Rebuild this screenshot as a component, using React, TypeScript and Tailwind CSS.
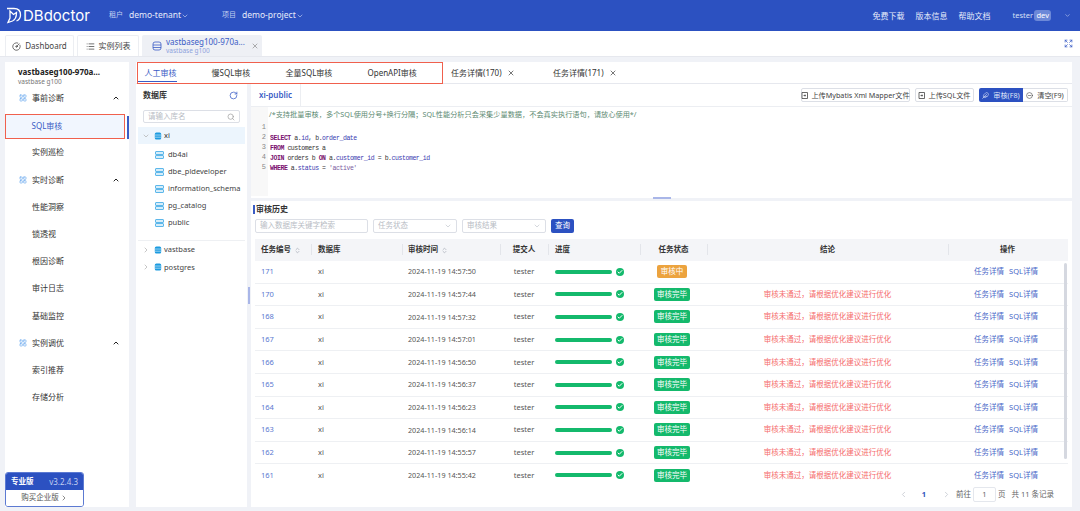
import { ChevronDown, ChevronUp, ChevronRight, ChevronLeft, RotateCw, Search, List, CircleGauge, X, Expand, ChevronsUpDown, Check, Feather, MinusCircle, LayoutGrid } from "lucide-react";

const FONT = "font-['Noto_Sans','Noto_Sans_CJK_SC',sans-serif]";

function Logo() {
  return (
    <svg width="16" height="17" viewBox="0 0 16 17" fill="none" stroke="white" strokeWidth="1.300">
      <path d="M1 1.500h7c4 0 6.500 2.500 6.500 6.500 0 3-1.500 5-4 6" />
      <path d="M4 4v7l-2 4.500 4.500-1.500c2.500-1 4-4 4-8.500L7.500 7.500z" />
    </svg>
  );
}

function DbIcon({ size = 8 }: { size?: number }) {
  return (
    <svg width={size} height={size} viewBox="0 0 10 10" className="shrink-0">
      <rect x="1" y="0.500" width="8" height="9" rx="2" fill="#1c9be0" />
      <path d="M1 3.800h8M1 6.500h8" stroke="white" strokeWidth="0.700" />
    </svg>
  );
}

function SchemaIcon() {
  return (
    <svg width="9" height="8" viewBox="0 0 9 8" fill="none" className="shrink-0">
      <rect x="0.500" y="0.500" width="8" height="3" rx="0.500" stroke="#5db7ea" fill="#d5edfa" />
      <rect x="0.500" y="4.500" width="8" height="3" rx="0.500" stroke="#5db7ea" fill="#d5edfa" />
    </svg>
  );
}

function ImportIcon() {
  return (
    <svg width="7" height="7" viewBox="0 0 7 7" fill="none" stroke="#444" strokeWidth="0.800" className="shrink-0">
      <path d="M1 0.500h5.500v6H1M1 0.500v6M3 3.500h2M3 3.500l1-1M3 3.500l1 1" />
    </svg>
  );
}

function NavGroup({ label }: { label: string }) {
  return (
    <div className="flex h-[27.200px] items-center pl-[14px] pr-[9px] text-[8px] text-[#333]">
      <LayoutGrid size={8} color="#6aa9ee" className="mr-[5px]" />
      <span className="flex-1">{label}</span>
      <ChevronUp size={8} color="#222" strokeWidth={3} />
    </div>
  );
}

function NavItem({ label }: { label: string }) {
  return <div className="flex h-[27.200px] items-center pl-[27px] text-[8px] text-[#333]">{label}</div>;
}

const rows = [
  ["171", "2024-11-19 14:57:50", "run"],
  ["170", "2024-11-19 14:57:44", "done"],
  ["168", "2024-11-19 14:57:32", "done"],
  ["167", "2024-11-19 14:57:01", "done"],
  ["166", "2024-11-19 14:56:50", "done"],
  ["165", "2024-11-19 14:56:37", "done"],
  ["164", "2024-11-19 14:56:23", "done"],
  ["163", "2024-11-19 14:56:14", "done"],
  ["162", "2024-11-19 14:55:57", "done"],
  ["161", "2024-11-19 14:55:42", "done"],
];

function Sort() {
  return <ChevronsUpDown size={7} color="#b5b9c2" strokeWidth={3} className="ml-[3px]" />;
}

const cols = "grid grid-cols-[56px_91px_98px_48px_92px_67px_241px_119px]";

function Divider() {
  return <span className="absolute left-0 top-[5px] h-[11px] w-px bg-[#e3e5ea]" />;
}

function Table() {
  return (
    <div className="mx-[4px] flex min-h-0 flex-1 flex-col overflow-hidden">
      <div className={`${cols} h-[22px] shrink-0 items-center bg-[#f4f5f8] text-[7.500px] font-semibold text-[#333]`}>
        <div className="relative flex items-center pl-[6px]">任务编号<Sort /></div>
        <div className="relative flex h-full items-center pl-[7px]"><Divider />数据库</div>
        <div className="relative flex h-full items-center pl-[6px]"><Divider />审核时间<Sort /></div>
        <div className="relative flex h-full items-center justify-center"><Divider />提交人</div>
        <div className="relative flex h-full items-center pl-[7px]"><Divider />进度</div>
        <div className="relative flex h-full items-center justify-center"><Divider />任务状态</div>
        <div className="relative flex h-full items-center justify-center"><Divider />结论</div>
        <div className="relative flex h-full items-center justify-center"><Divider />操作</div>
      </div>
      <div className="relative min-h-0 flex-1 overflow-hidden">
        {rows.map(([id, time, st]) => (
          <div key={id} className={`${cols} h-[22.600px] items-center border-b border-[#eef0f3] text-[7.500px] text-[#555]`}>
            <div className="pl-[6px] text-[#5a78d0]">{id}</div>
            <div className="pl-[7px]">xi</div>
            <div className="whitespace-nowrap pl-[6px] text-[7.200px]">{time}</div>
            <div className="text-center">tester</div>
            <div className="flex items-center pl-[7px]">
              <div className="h-[4px] w-[57px] rounded-full bg-[#14b96c]" />
              <div className="ml-[4px] flex h-[8px] w-[8px] items-center justify-center rounded-full bg-[#14b96c]">
                <Check size={6} color="white" strokeWidth={4} />
              </div>
            </div>
            <div className="flex justify-center pr-[3px]">
              {st === "run" ? (
                <span className="rounded-[2px] bg-[#eca33e] px-[4px] py-[2px] text-[7.500px] leading-[9px] text-white">审核中</span>
              ) : (
                <span className="rounded-[2px] bg-[#14b96c] px-[3px] py-[2px] text-[7.500px] leading-[9px] text-white">审核完毕</span>
              )}
            </div>
            <div className="text-center text-[#f56c6c]">{st === "run" ? "" : "审核未通过，请根据优化建议进行优化"}</div>
            <div className="flex justify-center gap-[5px] pr-[3px] text-[#4a68c8]">
              <span>任务详情</span>
              <span>SQL详情</span>
            </div>
          </div>
        ))}
        <div className="absolute right-[1px] top-[2px] h-[196px] w-[3px] rounded-full bg-[#d5d8e0]" />
      </div>
      <div className="flex h-[25px] shrink-0 items-center justify-end pr-[14px] text-[7.500px] text-[#666]">
        <ChevronLeft size={9} color="#c0c4cc" className="mr-[14px]" />
        <span className="mr-[16px] font-bold text-[#2f52bd]">1</span>
        <ChevronRight size={9} color="#c0c4cc" className="mr-[5px]" />
        <span>前往</span>
        <span className="mx-[2px] flex h-[15px] w-[23px] items-center justify-center rounded-[2px] border border-[#e4e7ed]">1</span>
        <span>页</span>
        <span className="ml-[6px]">共 11 条记录</span>
      </div>
    </div>
  );
}

function Select({ label, w, arrow }: { label: string; w: string; arrow?: boolean }) {
  return (
    <div className={`flex h-[14px] items-center justify-between rounded-[2px] border border-[#dcdfe6] px-[4px] text-[7.500px] text-[#b8bcc4] ${w}`}>
      {label}
      {arrow && <ChevronDown size={8} color="#c0c4cc" />}
    </div>
  );
}

export default function App() {
  return (
    <div className={`${FONT} flex h-[511px] w-[1080px] flex-col overflow-hidden bg-[#f0f2f7]`}>
      <header className="flex h-[31px] shrink-0 items-center whitespace-nowrap bg-[#2c51c1] pl-[6px] pr-[9px] text-white">
        <Logo />
        <span className="ml-[1px] w-[86px] font-['Inter',sans-serif] text-[15px] leading-none">DBdoctor</span>
        <span className="w-[20px] text-[7px] text-[#c3cff0]">租户</span>
        <span className="w-[46px] text-[8.500px] text-[#e6ebfa]">demo-tenant</span>
        <ChevronDown size={8} className="ml-[6px] text-[#c3cff0]" />
        <span className="ml-[33px] w-[20px] text-[7px] text-[#c3cff0]">项目</span>
        <span className="w-[48px] text-[8.500px] text-[#e6ebfa]">demo-project</span>
        <ChevronDown size={8} className="ml-[6px] text-[#c3cff0]" />
        <div className="flex-1" />
        <span className="text-[8px] text-[#e6ebfa]">免费下载</span>
        <span className="ml-[11px] text-[8px] text-[#e6ebfa]">版本信息</span>
        <span className="ml-[11px] text-[8px] text-[#e6ebfa]">帮助文档</span>
        <span className="ml-[22px] w-[22px] text-[7.500px] text-[#d8e0f6]">tester</span>
        <span className="rounded-[3px] bg-[#6c88d8] px-[2px] py-[1px] text-[7.500px] leading-[9px]">dev</span>
        <ChevronDown size={7} className="ml-[13px] text-[#c3cff0]" />
      </header>

      <div className="flex h-[26px] shrink-0 items-end border-b border-[#e6e8ee] bg-white pl-[5px] pr-[7px]">
        <div className="flex h-[21px] w-[69px] items-center justify-center rounded-t-[2px] border border-b-0 border-[#eceef2] text-[8px] text-[#444]">
          <CircleGauge size={9} className="mr-[4px]" />Dashboard
        </div>
        <div className="ml-[3px] flex h-[21px] w-[62px] items-center justify-center rounded-t-[2px] border border-b-0 border-[#eceef2] text-[8px] text-[#444]">
          <List size={9} className="mr-[4px]" />实例列表
        </div>
        <div className="ml-[3px] flex h-[21px] w-[120px] items-center rounded-t-[2px] bg-[#eef0f5] pl-[10px]">
          <svg width="10" height="10" viewBox="0 0 10 10" fill="none" stroke="#3a5cc5" strokeWidth="0.800" className="shrink-0">
            <rect x="1" y="1" width="8" height="8" rx="2" />
            <path d="M1 4h8M1 6.500h8" />
          </svg>
          <div className="ml-[4px] flex w-[80px] flex-col justify-center whitespace-nowrap leading-[9px]">
            <span className="text-[8px] text-[#3a5cc5]">vastbaseg100-970a...</span>
            <span className="text-[6.500px] text-[#8fa3dd]">vastbase g100</span>
          </div>
          <X size={8} color="#888" className="ml-[5px]" />
        </div>
        <div className="flex-1" />
        <Expand size={9} color="#3a5cc5" className="mb-[8px]" />
      </div>

      <div className="flex min-h-0 flex-1 pb-[4px] pl-[5px] pr-[8px] pt-[5px]">
        <aside className="flex w-[124px] shrink-0 flex-col bg-white">
          <div className="h-[22.500px] pl-[13px] pt-[5px] leading-[10px]">
            <div className="whitespace-nowrap text-[8px] font-bold text-[#222]">vastbaseg100-970a...</div>
            <div className="text-[6.500px] text-[#777]">vastbase g100</div>
          </div>
          <NavGroup label="事前诊断" />
          <div className="flex h-[27.200px] items-end">
            <div className="flex h-[25px] w-[120px] items-center border-[1.500px] border-[#f0604d] bg-[#f1f6fe] pl-[25.500px] text-[8px] text-[#3a5cc5]">SQL审核</div>
            <div className="ml-[2px] h-[23px] w-[2px] bg-[#3a5cc5]" />
          </div>
          <NavItem label="实例巡检" />
          <NavGroup label="实时诊断" />
          <NavItem label="性能洞察" />
          <NavItem label="锁透视" />
          <NavItem label="根因诊断" />
          <NavItem label="审计日志" />
          <NavItem label="基础监控" />
          <NavGroup label="实例调优" />
          <NavItem label="索引推荐" />
          <NavItem label="存储分析" />
          <div className="flex-1" />
          <div className="w-[79px] overflow-hidden rounded-[3px] border border-[#5c7ad2]">
            <div className="flex h-[17px] items-center justify-between bg-[#2c51c1] px-[5px] text-white">
              <span className="text-[7.500px] font-bold">专业版</span>
              <span className="text-[8px] text-[#c3cff0]">v3.2.4.3</span>
            </div>
            <div className="flex h-[16px] items-center justify-center gap-[1px] bg-white text-[7.500px] text-[#555]">购买企业版<ChevronRight size={8} /></div>
          </div>
        </aside>

        <main className="ml-[7px] flex min-w-0 flex-1 flex-col">
          <div className="flex h-[22px] shrink-0 items-stretch border-b border-[#e6e8ee] bg-white text-[8px] text-[#333]">
            <div className="ml-[1px] flex h-[22px] w-[306px] items-center border-[1.500px] border-[#f0604d]">
              <div className="relative flex h-full w-[73.500px] items-center pl-[6.500px] text-[#3a5cc5]">
                人工审核
                <span className="absolute bottom-[1px] left-0 h-[1px] w-[39px] bg-[#3a5cc5]" />
              </div>
              <div className="w-[74px]">慢SQL审核</div>
              <div className="w-[82px]">全量SQL审核</div>
              <div>OpenAPI审核</div>
            </div>
            <div className="ml-[8px] flex w-[102px] items-center">任务详情(170)<X size={8} className="ml-[5px]" /></div>
            <div className="flex items-center">任务详情(171)<X size={8} className="ml-[5px]" /></div>
          </div>

          <div className="flex min-h-0 flex-1">
            <div className="w-[111px] shrink-0 bg-white">
              <div className="flex h-[22px] items-center justify-between pl-[7px] pr-[9px]">
                <span className="text-[8px] font-semibold text-[#333]">数据库</span>
                <RotateCw size={9} color="#3a5cc5" />
              </div>
              <div className="mx-[7px] mt-[4px] flex h-[13px] items-center justify-between rounded-[2px] border border-[#dcdfe6] px-[4px] text-[7.500px] text-[#b8bcc4]">
                请输入库名<Search size={8} color="#999" />
              </div>
              <div className="ml-[2px] mt-[4px] flex h-[17px] w-[107px] items-center bg-[#ecf5fd] pl-[4px] text-[7.500px] text-[#333]">
                <ChevronDown size={8} color="#aaa" className="mr-[4px]" />
                <DbIcon />
                <span className="ml-[2px]">xi</span>
              </div>
              <div className="mt-[2.500px]">
                {["db4ai", "dbe_pldeveloper", "information_schema", "pg_catalog", "public"].map((s) => (
                  <div key={s} className="flex h-[17px] items-center pl-[19px] text-[7.500px] text-[#444]">
                    <SchemaIcon />
                    <span className="ml-[4px]">{s}</span>
                  </div>
                ))}
              </div>
              <div className="mx-[2px] mt-[8.500px] h-px bg-[#eef0f3]" />
              {["vastbase", "postgres"].map((s) => (
                <div key={s} className="flex h-[17.500px] items-center pl-[6px] text-[7.500px] text-[#444]">
                  <ChevronRight size={8} color="#aaa" className="mr-[4px]" />
                  <DbIcon />
                  <span className="ml-[2px]">{s}</span>
                </div>
              ))}
            </div>

            <div className="relative ml-[4px] flex min-w-0 flex-1 flex-col">
              <div className="absolute left-[-3px] top-[203px] h-[17px] w-[2px] bg-[#a9b6e8]" />
              <div className="absolute left-[402px] top-[113px] h-[2px] w-[18px] bg-[#a9b6e8]" />
              <div className="h-[114px] shrink-0 bg-white">
                <div className="flex h-[23px] items-stretch border-b border-[#eceef2]">
                  <div className="flex w-[50px] items-center justify-center border-r border-[#eceef2] text-[8px] font-semibold text-[#3a5cc5]">xi-public</div>
                  <div className="flex flex-1 items-center justify-end whitespace-nowrap pr-[4px] text-[7.200px] text-[#444]">
                    <div className="flex h-[14px] w-[109px] items-center justify-center gap-[3px] rounded-[2px] border border-[#dcdfe6]"><ImportIcon />上传Mybatis Xml Mapper文件</div>
                    <div className="ml-[5px] flex h-[14px] w-[59px] items-center justify-center gap-[3px] rounded-[2px] border border-[#dcdfe6]"><ImportIcon />上传SQL文件</div>
                    <div className="ml-[5px] flex h-[14px] w-[44px] items-center justify-center gap-[4px] rounded-l-[2px] bg-[#2c51c1] text-[#dfe6f8]"><Feather size={7} />审核(F8)</div>
                    <div className="flex h-[14px] w-[45px] items-center justify-center gap-[4px] rounded-r-[2px] border border-l-0 border-[#dcdfe6]"><MinusCircle size={7} />清空(F9)</div>
                  </div>
                </div>
                <div className="flex h-[89px]">
                  <div className="w-[17px] shrink-0 bg-[#f8f8f8] pr-[2px] pt-[15px] text-right font-['Liberation_Mono',monospace] text-[7px] leading-[10px] text-[#888]">
                    <div>1</div><div>2</div><div>3</div><div>4</div><div>5</div>
                  </div>
                  <div className="pl-[1px] pt-[2px]">
                    <div className="whitespace-nowrap text-[7.200px] leading-[10px] text-[#5d8a72]">/*支持批量审核，多个SQL使用分号+换行分隔；SQL性能分析只会采集少量数据，不会真实执行语句，请放心使用*/</div>
                    <div className="h-[15px]" />
                    <div className="whitespace-pre pl-[1px] font-['Liberation_Mono',monospace] text-[6.500px] leading-[10px] tracking-[-0.430px]">
                      <div><b className="text-[#7a0f6f]">SELECT</b> <span className="text-[#333]">a.</span><span className="text-[#3a3ab0]">id</span><span className="text-[#333]">, b.</span><span className="text-[#3a3ab0]">order_date</span></div>
                      <div><b className="text-[#7a0f6f]">FROM</b> <span className="text-[#333]">customers a</span></div>
                      <div><b className="text-[#7a0f6f]">JOIN</b> <span className="text-[#333]">orders b</span> <b className="text-[#7a0f6f]">ON</b> <span className="text-[#333]">a.</span><span className="text-[#3a3ab0]">customer_id</span> <span className="text-[#333]">= b.</span><span className="text-[#3a3ab0]">customer_id</span></div>
                      <div><b className="text-[#7a0f6f]">WHERE</b> <span className="text-[#333]">a.</span><span className="text-[#3a3ab0]">status</span> <span className="text-[#333]">=</span> <span className="text-[#7a5aa0]">'active'</span></div>
                    </div>
                  </div>
                </div>
              </div>
              <div className="mt-[3px] flex min-h-0 flex-1 flex-col bg-white">
                <div className="flex h-[16px] shrink-0 items-center pl-[2px] text-[8px] font-semibold text-[#333]">
                  <span className="mr-[1.500px] h-[9px] w-[1.500px] bg-[#3a5cc5]" />审核历史
                </div>
                <div className="flex h-[22px] shrink-0 items-start gap-[5px] pl-[4px] pt-[2px]">
                  <Select label="输入数据库关键字检索" w="w-[113px]" />
                  <Select label="任务状态" w="w-[84px]" arrow />
                  <Select label="审核结果" w="w-[84px]" arrow />
                  <div className="flex h-[14px] w-[23px] items-center justify-center rounded-[2px] bg-[#2c51c1] text-[7.500px] text-white">查询</div>
                </div>
                <Table />
              </div>
            </div>
          </div>
        </main>
      </div>
    </div>
  );
}
